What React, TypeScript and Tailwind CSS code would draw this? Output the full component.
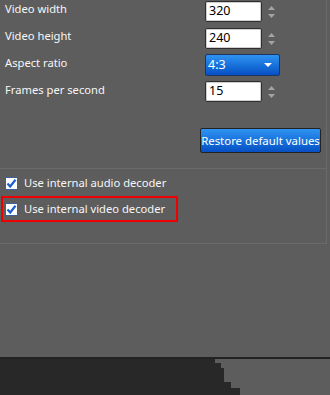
import React from "react";

function Spinner() {
  return (
    <div className="flex flex-col items-center justify-center gap-[4px] ml-[5px] w-[8px]">
      <svg width="7" height="4" viewBox="0 0 7 4"><polygon points="3.5,0 7,4 0,4" fill="#a3a3a3" /></svg>
      <svg width="7" height="4" viewBox="0 0 7 4"><polygon points="0,0 7,0 3.5,4" fill="#a3a3a3" /></svg>
    </div>
  );
}

function NumInput({ value }: { value: string }) {
  return (
    <div className="flex items-center">
      <div className="w-[57px] h-[21px] bg-white border border-[#2e2e2e] rounded-[2px] shadow-[inset_0_0_0_1px_#cfcfcf] flex items-center pl-[3px] text-[12.5px] text-black leading-none">
        {value}
      </div>
      <Spinner />
    </div>
  );
}

function Check() {
  return (
    <svg width="13" height="13" viewBox="0 0 13 13">
      <rect x="0.5" y="0.5" width="12" height="12" fill="#ffffff" stroke="#3b5f9a" />
      <path d="M2.5 6.5 L5.2 9.5 L10.5 2.8" fill="none" stroke="#1b5ed1" strokeWidth="2.2" />
    </svg>
  );
}

export default function App() {
  const font = { fontFamily: '"Noto Sans", "Open Sans", Arial, sans-serif' };
  return (
    <div className="w-[330px] h-[395px] bg-[#5d5d5d] overflow-hidden flex flex-col text-[11.2px] text-[#f7f7f7]" style={font}>
      <div className="w-[327px] h-[169px] border-b border-r border-[#6a6a6a] flex flex-col shrink-0">
        <div className="flex items-start pl-[5px] pt-[1px] h-[28px]">
          <span className="w-[200px] leading-[16px]">Video width</span>
          <NumInput value="320" />
        </div>
        <div className="flex items-start pl-[5px] h-[26px]">
          <span className="w-[200px] leading-[16px]">Video height</span>
          <NumInput value="240" />
        </div>
        <div className="flex items-start pl-[5px] h-[27px]">
          <span className="w-[200px] leading-[16px] pt-[1px]">Aspect ratio</span>
          <div className="w-[75px] h-[22px] rounded-[2px] border border-[#1d3560] bg-gradient-to-b from-[#2f93f2] to-[#0750c4] flex items-center justify-between pl-[2px] pr-[7px] text-white text-[12.5px]">
            <span>4:3</span>
            <svg width="8" height="4" viewBox="0 0 8 4"><polygon points="0,0 8,0 4,4" fill="#ffffff" /></svg>
          </div>
        </div>
        <div className="flex items-start pl-[5px] h-[47px]">
          <span className="w-[200px] leading-[16px] pt-[1px]">Frames per second</span>
          <NumInput value="15" />
        </div>
        <div className="flex justify-end pr-[5px]">
          <div className="w-[121px] h-[25px] rounded-[2px] border border-[#222] bg-gradient-to-b from-[#2f93f2] to-[#0750c4] flex items-center justify-center text-white text-[11.4px] whitespace-nowrap">
            Restore default values
          </div>
        </div>
      </div>
      <div className="w-[327px] h-[75px] border-b border-r border-[#6a6a6a] flex flex-col shrink-0 pt-[7px]">
        <div className="flex items-center pl-[5px] h-[14px] gap-[6px]">
          <Check />
          <span className="leading-none">Use internal audio decoder</span>
        </div>
        <div className="mt-[6px] ml-[1px] w-[177px] h-[26px] border-2 border-[#ee0000] flex items-center pl-[2px] gap-[6px]">
          <Check />
          <span className="leading-none">Use internal video decoder</span>
        </div>
      </div>
      <div className="flex-1" />
      <div className="h-[38px] shrink-0 border-t-2 border-[#222] bg-[#282828] relative">
        <svg className="absolute right-0 top-0" width="116" height="36" viewBox="0 0 116 36">
          <polygon points="1,0 116,0 116,36 26,36 26,29 17,29 17,23 10,23 10,9 7,9 7,4 1,4" fill="#5d5d5d" />
        </svg>
      </div>
    </div>
  );
}
